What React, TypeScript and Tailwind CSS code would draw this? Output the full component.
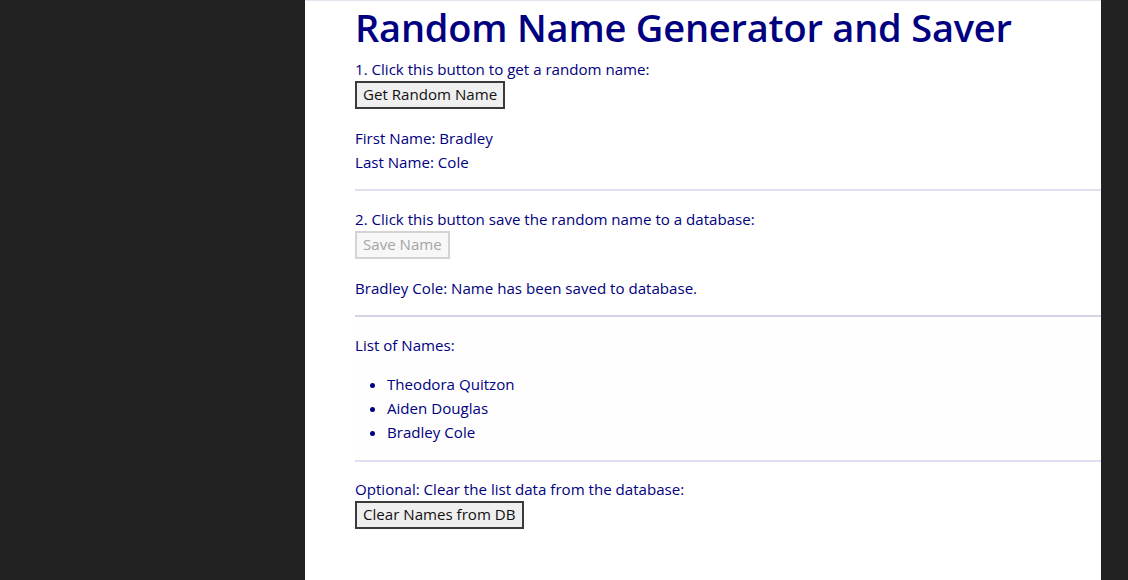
import React from "react";

const Hr = () => <div className="h-[2px] bg-[#e0def0] mr-0" />;

const Btn = ({ children, disabled }: { children: React.ReactNode; disabled?: boolean }) => (
  <button
    disabled={disabled}
    className={
      disabled
        ? "h-[28px] px-[6px] border-2 border-[#d4d4d4] bg-[#f7f7f7] text-[#a5a5a5] leading-none"
        : "h-[28px] px-[6px] border-2 border-[#3a3a3a] bg-[#efefef] text-[#111] leading-none"
    }
  >
    {children}
  </button>
);

export default function App() {
  return (
    <div
      className="flex h-[580px] w-[1128px] bg-[#222222] overflow-hidden"
      style={{ fontFamily: '"Open Sans", "Noto Sans", sans-serif' }}
    >
      <div className="w-[305px] shrink-0" />
      <div className="w-[796px] shrink-0 bg-white border-t border-[#e4e4ee] pl-[50px] text-[#000080] text-[15.1px]">
        <h1 className="text-[38px] font-semibold leading-[52px] tracking-[-0.2px]">Random Name Generator and Saver</h1>
        <div className="mt-[4px] leading-[24px]">1. Click this button to get a random name:</div>
        <div className="flex"><Btn>Get Random Name</Btn></div>
        <div className="mt-[17px] leading-[24px]">
          <div>First Name: Bradley</div>
          <div>Last Name: Cole</div>
        </div>
        <div className="mt-[15px]"><Hr /></div>
        <div className="mt-[16px] leading-[24px]">2. Click this button save the random name to a database:</div>
        <div className="flex"><Btn disabled>Save Name</Btn></div>
        <div className="mt-[17px] leading-[24px]">Bradley Cole: Name has been saved to database.</div>
        <div className="mt-[15px] h-[2px] bg-[#d6d2e8]" />
        <div className="bg-[#fefefe] pt-[16px] pb-[16px]">
          <div className="leading-[24px]">List of Names:</div>
          <ul className="list-disc pl-[32px] mt-[15px] leading-[24px]">
            <li>Theodora Quitzon</li>
            <li>Aiden Douglas</li>
            <li>Bradley Cole</li>
          </ul>
        </div>
        <Hr />
        <div className="mt-[15px] leading-[24px]">Optional: Clear the list data from the database:</div>
        <div className="flex"><Btn>Clear Names from DB</Btn></div>
      </div>
      <div className="flex-1" />
    </div>
  );
}
